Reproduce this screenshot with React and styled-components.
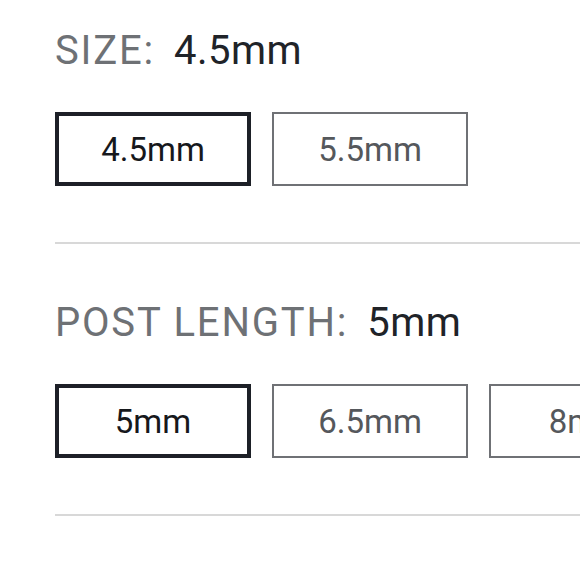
import React, { useState } from 'react'
import styled, { createGlobalStyle } from 'styled-components'

const GlobalStyle = createGlobalStyle`
  html, body {
    margin: 0;
    padding: 0;
    background: #ffffff;
    overflow: hidden;
  }
  body {
    font-family: Roboto, "Liberation Sans", sans-serif;
  }
`

const StyledPage = styled.div`
  padding-left: 55px;
  width: 700px;
`

const StyledSection = styled.div`
  padding: ${props => props.first ? '27px' : '55px'} 0 56px 0;
  border-bottom: 2px solid #d8d8d8;
`

const StyledTitle = styled.div`
  display: flex;
  align-items: baseline;
  font-size: 40px;
  line-height: 48px;
  margin: 0 0 37px 0;
`

const StyledLabel = styled.span`
  color: #6e7175;
  letter-spacing: 1.8px;
  margin-right: 19px;
`

const StyledValue = styled.span`
  color: #202328;
  letter-spacing: 0.5px;
`

const StyledOptions = styled.div`
  display: flex;
  gap: 21px;
`

const StyledOption = styled.button`
  flex: none;
  display: flex;
  justify-content: center;
  align-items: center;
  box-sizing: border-box;
  width: 196px;
  height: 74px;
  padding: 0;
  background: #ffffff;
  border: ${props => props.selected ? '4px solid #1d2027' : '2px solid #6f7175'};
  color: ${props => props.selected ? '#16181c' : '#55585c'};
  font-family: Roboto, "Liberation Sans", sans-serif;
  font-size: 33px;
  cursor: pointer;
  :focus {
    outline: none;
  }
`

function OptionGroup ({ label, options, first }) {
  const [value, setValue] = useState(options[0])

  return (
    <StyledSection first={first}>
      <StyledTitle>
        <StyledLabel>{label}:</StyledLabel>
        <StyledValue>{value}</StyledValue>
      </StyledTitle>
      <StyledOptions>
        {options.map(option => (
          <StyledOption key={option} selected={option === value} onClick={() => setValue(option)}>
            {option}
          </StyledOption>
        ))}
      </StyledOptions>
    </StyledSection>
  )
}

export default function App () {
  return (
    <StyledPage>
      <GlobalStyle />
      <OptionGroup first label="SIZE" options={['4.5mm', '5.5mm']} />
      <OptionGroup label="POST LENGTH" options={['5mm', '6.5mm', '8mm']} />
    </StyledPage>
  )
}
